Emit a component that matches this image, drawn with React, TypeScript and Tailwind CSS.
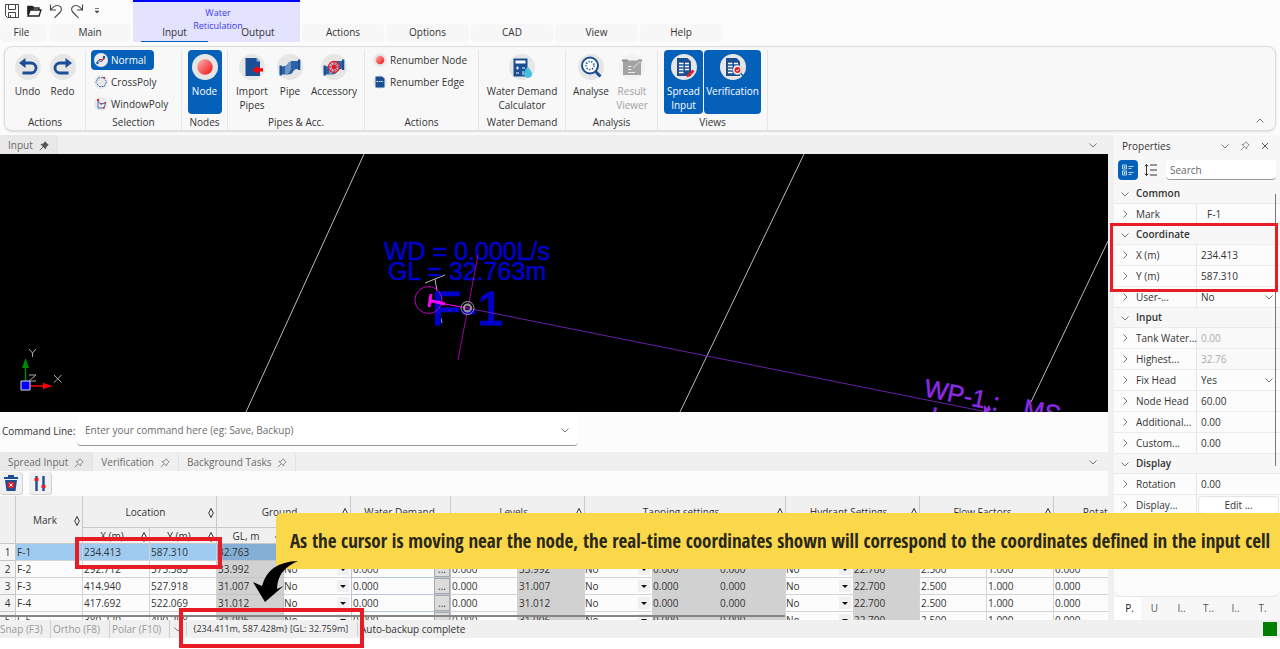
import React, { ReactNode } from "react";

const Disc = ({ children, faded }: { children: ReactNode; faded?: boolean }) => (
  <svg viewBox="0 0 26 26" className="size-[26px] shrink-0" aria-hidden="true">
    <circle cx="13" cy="13" r="13" fill={faded ? "#f2f2f2" : "#e6e6e6"} />
    {children}
  </svg>
);

const UndoIcon = () => (
  <Disc>
    <path d="M8 9h8a4.6 4.6 0 0 1 0 10H7.5" fill="none" stroke="#1b4f93" strokeWidth="2.8" />
    <path d="M10.5 4v10L4 9z" fill="#1b4f93" />
  </Disc>
);
const RedoIcon = () => (
  <Disc>
    <path d="M18 9h-8a4.6 4.6 0 0 0 0 10h8.5" fill="none" stroke="#1b4f93" strokeWidth="2.8" />
    <path d="M15.5 4v10L22 9z" fill="#1b4f93" />
  </Disc>
);
const NodeIcon = () => (
  <Disc>
    <defs>
      <linearGradient id="node" x1="0" y1="0" x2="1" y2="1">
        <stop offset="0" stopColor="#ffb4b4" />
        <stop offset="1" stopColor="#ee1111" />
      </linearGradient>
    </defs>
    <circle cx="13" cy="13" r="7.8" fill="url(#node)" />
  </Disc>
);
const ImportIcon = () => (
  <Disc>
    <path d="M6.500 4h11l3.500 3.500V22H6.500z" fill="#1b4f93" />
    <path d="M17.500 4v3.500H21" fill="#8aa9d4" />
    <path d="M24 14.300h-5v-2.600L13.500 16l5.500 4v-2.600h5z" fill="#ff0000" />
  </Disc>
);
const PipeShape = () => (
  <>
    <path d="M3.500 12.500q6.500 0 7.500-3 1-2.500 4.500-2.500H22v8q-4.500-.500-5.500 2-1.500 3.500-5.500 3.500H3.500z" fill="#2c62a5" />
    <path d="M8 12.300q2.500-.6 3-2.800.6-2 3-2.400v8q-1.500 3.400-3.500 5.400H8z" fill="#9db8da" opacity=".6" />
    <path d="M2.500 11.500h2.300v10H2.500zM21 5.500h2.300v10.500H21z" fill="#1b4f93" />
  </>
);
const PipeIcon = () => (
  <Disc>
    <PipeShape />
  </Disc>
);
const AccessoryIcon = () => (
  <Disc>
    <PipeShape />
    <g fill="none" stroke="#e81c24" strokeWidth="1.300">
      <circle cx="13" cy="13" r="5.500" fill="#e6c9cf" fillOpacity=".6" />
      <circle cx="13" cy="13" r="1.500" />
      <path d="M13 7.500v11M7.500 13h11M9 9l8 8M17 9l-8 8" strokeWidth=".9" />
    </g>
  </Disc>
);
const CalculatorIcon = () => (
  <Disc>
    <path d="M4.500 4.500h14v18h-14z" fill="#1b4f93" />
    <path d="M6.500 6.500h10v3h-10z" fill="#fff" />
    <path d="M7 14h3M8.500 12.500v3M13 14h3M7 19h3M13 18h2M13 20h2" stroke="#fff" strokeWidth="1.100" />
    <path d="M18.500 12.500q4.500 5 4.500 7.200a4 4 0 0 1-8 0q0-2.200 3.500-7.200z" fill="#45bfe0" />
  </Disc>
);
const AnalyseIcon = () => (
  <Disc>
    <circle cx="12" cy="11.500" r="8" fill="#fff" stroke="#1b4f93" strokeWidth="2" />
    <circle cx="12" cy="11.500" r="4" fill="none" stroke="#1b4f93" strokeWidth="1.600" strokeDasharray="1.300 1.500" />
    <path d="m17.500 17.500 5 5" stroke="#1b4f93" strokeWidth="3" />
  </Disc>
);
const ResultIcon = () => (
  <Disc faded>
    <path d="M4 6.500h18V21H4z" fill="#a3a3a3" />
    <path d="M3 5.500h6v2H3zM19 5.500h4v2h-4z" fill="#8d8d8d" />
    <path d="M9 12.500h3.500M9 15.500h3.500M9 18.500h7" stroke="#ececec" strokeWidth="1.200" />
    <path d="m14 14 7.500-7" stroke="#c4c4c4" strokeWidth="1.600" />
  </Disc>
);
const Sheet = () => (
  <>
    <path d="M6 4h10.500L20 7.500V22H6z" fill="#1b4f93" />
    <path d="M8 9.500h4.500M14 9.500h4M8 12.500h4.500M14 12.500h4M8 15.500h4.500M14 15.500h4M8 18.500h4.500" stroke="#fff" strokeWidth="1.300" />
  </>
);
const SpreadIcon = () => (
  <Disc>
    <Sheet />
    <path d="m15.500 23.500 1-3 5-5 2 2-5 5z" fill="#e81c24" />
  </Disc>
);
const VerificationIcon = () => (
  <Disc>
    <Sheet />
    <circle cx="17.500" cy="16" r="4.500" fill="#fff" stroke="#b8bcc8" strokeWidth=".8" />
    <circle cx="17.500" cy="16" r="3" fill="#e81c24" />
    <path d="m16 16 1.200 1.200 2-2.200" fill="none" stroke="#fff" strokeWidth=".9" />
    <path d="m20.500 19.200 2.500 2.500" stroke="#1b4f93" strokeWidth="1.400" />
  </Disc>
);

const SmallDisc = ({ children }: { children: ReactNode }) => (
  <svg viewBox="0 0 14 14" className="size-3.5 shrink-0" aria-hidden="true">
    <circle cx="7" cy="7" r="7" fill="#e9e9e9" />
    {children}
  </svg>
);

type Direction = "down" | "up" | "right";
const Chevron = ({ dir, className }: { dir: Direction; className?: string }) => (
  <svg viewBox="0 0 10 10" className={`size-2.5 shrink-0 ${className ?? ""}`} aria-hidden="true">
    <path
      d={dir === "down" ? "M1.500 3.500 5 7l3.500-3.500" : dir === "up" ? "M1.500 6.500 5 3l3.500 3.500" : "M3.500 1.500 7 5 3.500 8.500"}
      fill="none"
      stroke="#777"
    />
  </svg>
);
const Pin = ({ solid }: { solid?: boolean }) => (
  <svg viewBox="0 0 10 10" className="size-2.5 shrink-0" aria-hidden="true">
    <path
      d="M6 .8 9.200 4 8.200 4.500 6.800 6 6.600 8 2 3.400 4 3.200 5.500 1.800zM4.200 5.800.8 9.200"
      fill={solid ? "#555" : "none"}
      stroke={solid ? "#555" : "#808080"}
      strokeWidth=".9"
    />
  </svg>
);

const Group = ({ title, className, children }: { title: string; className: string; children: ReactNode }) => (
  <section className={`flex shrink-0 flex-col border-r border-[#e6e6e6] ${className}`}>
    <div className="flex h-[64px] shrink-0 justify-center gap-px">{children}</div>
    <h2 className="text-center leading-4">{title}</h2>
  </section>
);

const BigButton = ({
  icon,
  label,
  className,
  active,
  disabled,
}: {
  icon: ReactNode;
  label: string;
  className: string;
  active?: boolean;
  disabled?: boolean;
}) => (
  <button
    type="button"
    disabled={disabled}
    className={`flex h-[64px] shrink-0 flex-col items-center rounded pt-1 ${active ? "bg-[#0560b9] text-white" : ""} ${disabled ? "text-[#a0a0a0]" : ""} ${className}`}
  >
    {icon}
    <span className="mt-1 leading-[14px]">{label}</span>
  </button>
);

const SmallButton = ({ icon, label, active }: { icon: ReactNode; label: string; active?: boolean }) => (
  <button
    type="button"
    className={`flex h-5 items-center gap-[3px] self-start rounded px-[3px] pr-2 ${active ? "bg-[#0560b9] text-white" : ""}`}
  >
    {icon}
    <span>{label}</span>
  </button>
);

const QuickAccess = () => (
  <div className="flex h-[22px] items-center gap-1.5 pl-1">
    <button type="button" aria-label="Save">
      <svg viewBox="0 0 16 16" className="size-4" fill="none" stroke="#444">
        <path d="M1.500 1.500h13v13h-11l-2-2zM4.500 1.500v5h7v-5M4.500 14.500v-5h7v5M6.500 12v2" />
      </svg>
    </button>
    <button type="button" aria-label="Open">
      <svg viewBox="0 0 16 16" className="size-4" fill="none" stroke="#222" strokeWidth="1.300">
        <path d="M2 13V3.500h4l1.500 1.500H13v2M2 13l2.200-6H15l-2 6z" />
        <path d="M2 4h5v2H4l-2 5z" fill="#222" />
      </svg>
    </button>
    <button type="button" aria-label="Undo last">
      <svg viewBox="0 0 16 16" className="size-4" fill="none" stroke="#444" strokeWidth="1.100">
        <path d="M2.500 1.500v5.500H8M2.500 7q3.500-4.500 7-4.500a3.800 3.800 0 0 1 2.800 6.500L6.500 14.800" />
      </svg>
    </button>
    <button type="button" aria-label="Redo last">
      <svg viewBox="0 0 16 16" className="size-4" fill="none" stroke="#444" strokeWidth="1.100">
        <path d="M12.500 1.500v5.500H7M12.500 7Q9 2.500 5.500 2.500A3.800 3.800 0 0 0 2.700 9l5.800 5.800" />
      </svg>
    </button>
    <button type="button" aria-label="Customise toolbar" className="ml-0.5">
      <svg viewBox="0 0 6 8" className="h-2 w-1.5">
        <path d="M1 1.500h4M1 4h4L3 6z" stroke="#555" strokeWidth=".8" fill="#555" />
      </svg>
    </button>
  </div>
);

const Tab = ({ label, className }: { label: string; className: string }) => (
  <button type="button" className={`h-[18px] shrink-0 rounded bg-[#f7f7f7] pb-0.5 ${className}`}>
    {label}
  </button>
);

const Header = () => (
  <header className="flex h-[46px] items-start">
    <div className="flex w-[133px] shrink-0 flex-col gap-0.5">
      <QuickAccess />
      <nav className="flex gap-0.5">
        <Tab label="File" className="w-[47px] pr-1" />
        <Tab label="Main" className="w-[82px]" />
      </nav>
    </div>
    <div className="relative h-[42px] w-[167px] shrink-0 border-t-2 border-[#0000ff] bg-[#e3e3fd]">
      <p className="ml-[57px] w-14 pt-1 text-center text-[9px] leading-[13px] text-[#3a3af0]">Water Reticulation</p>
      <nav className="absolute inset-x-0 bottom-0 flex h-[18px]">
        <button type="button" className="mx-2 w-[67px] border-b border-[#0560b9]">
          Input
        </button>
        <button type="button" className="w-[84px] border-b border-transparent">
          Output
        </button>
      </nav>
    </div>
    <nav className="flex gap-0.5 pt-6 pl-0.5">
      <Tab label="Actions" className="w-[82px]" />
      <Tab label="Options" className="w-[83px]" />
      <Tab label="CAD" className="w-[82px]" />
      <Tab label="View" className="w-[83px]" />
      <Tab label="Help" className="w-[82px]" />
    </nav>
  </header>
);

const Ribbon = () => (
  <div className="mx-1 flex h-[85px] rounded-lg border border-[#dcdcdc] bg-[#f8f8f8] pt-[3px] shadow-sm">
    <Group title="Actions" className="w-[81px]">
      <BigButton icon={<UndoIcon />} label="Undo" className="w-[34px]" />
      <BigButton icon={<RedoIcon />} label="Redo" className="w-[34px]" />
    </Group>
    <Group title="Selection" className="w-[96px]">
      <div className="flex w-full flex-col gap-0.5 pl-[5px]">
        <SmallButton
          active
          label="Normal"
          icon={
            <SmallDisc>
              <path d="M3 10q1-4 3-2t4-4" fill="none" stroke="#1b4f93" />
              <path d="M5 6.500h3l3-1" stroke="#e81c24" fill="none" />
              <circle cx="3.500" cy="10" r="1.200" fill="#1b4f93" />
              <circle cx="10" cy="4" r="1.200" fill="#1b4f93" />
            </SmallDisc>
          }
        />
        <SmallButton
          label="CrossPoly"
          icon={
            <SmallDisc>
              <path d="m4 3 6-.5L12.500 7 10 11.500H5L2 7.500z" fill="none" stroke="#3f6fb0" strokeDasharray="2 .8" />
              <circle cx="10" cy="2.800" r="1" fill="#e81c24" />
            </SmallDisc>
          }
        />
        <SmallButton
          label="WindowPoly"
          icon={
            <SmallDisc>
              <path d="M4 3v8h6l1.500-5L7 7 4 4.500" fill="none" stroke="#3f6fb0" />
              <path d="M3 2h2v2H3zM6.200 6h1.500v1.500H6.200zM10.500 5H12v1.500h-1.500zM9 10h1.500v1.500H9z" fill="#e81c24" />
            </SmallDisc>
          }
        />
      </div>
    </Group>
    <Group title="Nodes" className="w-[46px]">
      <BigButton active icon={<NodeIcon />} label="Node" className="w-[34px]" />
    </Group>
    <Group title="Pipes & Acc." className="w-[137px]">
      <BigButton icon={<ImportIcon />} label="Import Pipes" className="w-[42px]" />
      <BigButton icon={<PipeIcon />} label="Pipe" className="w-[32px]" />
      <BigButton icon={<AccessoryIcon />} label="Accessory" className="w-[54px]" />
    </Group>
    <Group title="Actions" className="w-[114px]">
      <div className="flex w-full flex-col gap-0.5 pl-[5px]">
        <SmallButton
          label="Renumber Node"
          icon={
            <SmallDisc>
              <circle cx="7" cy="7" r="4.300" fill="url(#node)" />
            </SmallDisc>
          }
        />
        <SmallButton
          label="Renumber Edge"
          icon={
            <SmallDisc>
              <path d="M2.500 1.500h6.500l2.500 2v9h-9z" fill="#1b4f93" />
              <path d="M3.500 6.500h7" stroke="#fff" strokeDasharray="1.500 .8" />
            </SmallDisc>
          }
        />
      </div>
    </Group>
    <Group title="Water Demand" className="w-[87px]">
      <BigButton icon={<CalculatorIcon />} label="Water Demand Calculator" className="w-[76px]" />
    </Group>
    <Group title="Analysis" className="w-[92px]">
      <BigButton icon={<AnalyseIcon />} label="Analyse" className="w-[40px]" />
      <BigButton disabled icon={<ResultIcon />} label="Result Viewer" className="w-[40px]" />
    </Group>
    <Group title="Views" className="w-[110px]">
      <BigButton active icon={<SpreadIcon />} label="Spread Input" className="w-[39px]" />
      <BigButton active icon={<VerificationIcon />} label="Verification" className="w-[57px]" />
    </Group>
    <button type="button" aria-label="Collapse ribbon" className="mr-2.5 mb-1 ml-auto self-end">
      <Chevron dir="up" />
    </button>
  </div>
);

const Drawing = () => (
  <svg
    viewBox="0 0 1108 258"
    preserveAspectRatio="xMinYMin slice"
    className="block h-[258px] w-full shrink-0 bg-black font-['Liberation_Sans',sans-serif]"
    role="img"
    aria-label="Network drawing"
  >
    <g stroke="#b9b9b9" strokeWidth="1" fill="none">
      <path d="M364 0 246 258M804 0 680 258M1108 87l-77 161" />
      <path d="m425 129 20-8M435 125l2 12M441 164l1 5" />
    </g>
    <g fill="#0000cc" stroke="#0000cc" strokeWidth=".5">
      <text x="384" y="106" fontSize="25">WD = 0.000L/s</text>
      <text x="388" y="126" fontSize="25">GL = 32.763m</text>
      <text x="432" y="171" fontSize="48" strokeWidth="1.200">F-1</text>
    </g>
    <path d="m467 154 520 104" stroke="#6a1fa8" />
    <path d="m478 101-20 105" stroke="#a000a0" />
    <circle cx="428.500" cy="146" r="13.500" fill="none" stroke="#c000c0" />
    <path d="m431 140-2 13M430 146.500l15 3.500" stroke="#ff00ff" strokeWidth="3" />
    <path d="m445 150 22 4" stroke="#ff00ff" />
    <g fill="none" stroke="#9a9a9a">
      <circle cx="467.500" cy="154" r="6.500" />
      <circle cx="467.500" cy="154" r="3.500" strokeWidth="2" />
    </g>
    <g fill="#8a2be2" stroke="#8a2be2" strokeWidth=".5" fontSize="25">
      <text transform="translate(923 242) rotate(11.500)">WP-1 :</text>
      <text transform="translate(1022 262) rotate(11.500)">MS</text>
      <text transform="translate(929 270) rotate(11.500)">L</text>
    </g>
    <path d="m984 251 3 3 2-3 2 5-3 2h-4z" fill="#8a2be2" />
    <path d="M25.500 227v-20" stroke="#008800" strokeWidth="1.500" />
    <path d="m25.500 204 3.500 10h-7z" fill="#008800" />
    <path d="M30 232h14" stroke="#ff0000" strokeWidth="1.500" />
    <path d="m52 232-9 3.300v-6.600z" fill="#ff0000" />
    <path d="M21 227h9v9h-9z" fill="#0000ff" stroke="#ddd" />
    <path
      d="m29 195 3.500 4 3.500-4M32.500 199v4M29 221h7l-7 6h7M54 221l7.500 7.500M61.500 221l-7.500 7.500"
      fill="none"
      stroke="#aaa"
    />
  </svg>
);

const CommandLine = () => (
  <form className="flex h-[40px] shrink-0 items-start bg-[#fcfcfc] pt-px pl-0.5">
    <label htmlFor="command" className="w-[75px] shrink-0 pt-2.5 leading-4">
      Command Line:
    </label>
    <div className="flex h-[33px] w-[501px] items-center rounded border-b border-[#9a9a9a] bg-white px-2 pt-0.5">
      <input
        id="command"
        placeholder="Enter your command here (eg: Save, Backup)"
        className="min-w-0 flex-1 outline-none placeholder:text-[#6b6b6b]"
      />
      <Chevron dir="down" />
    </div>
  </form>
);

const DockTab = ({ label, active, solid }: { label: string; active?: boolean; solid?: boolean }) => (
  <button
    type="button"
    className={`flex h-[19px] items-center gap-1.5 rounded-t border-r border-[#e2e2e2] px-2 pt-0.5 text-[#6a6a6a] ${active ? "bg-[#e8e8e8]" : ""}`}
  >
    {label}
    <Pin solid={solid} />
  </button>
);

const Diamond = () => (
  <svg viewBox="0 0 6 10" className="h-2.5 w-1.5 shrink-0" aria-hidden="true">
    <path d="m3 .5 2.300 4.500L3 9.500.7 5z" fill="none" stroke="#222" strokeWidth=".9" />
  </svg>
);

const HeadCell = ({ label, sort = true }: { label: string; sort?: boolean }) => (
  <div className="flex items-center pt-0.5 pr-0.5 leading-[13px]">
    <span className="flex-1 whitespace-nowrap">{label}</span>
    {sort && <Diamond />}
  </div>
);

const groups: { label: string; span: number; sort?: boolean }[] = [
  { label: "Location", span: 2 },
  { label: "Ground", span: 2 },
  { label: "Water Demand", span: 1, sort: false },
  { label: "Levels", span: 2 },
  { label: "Tapping settings", span: 3 },
  { label: "Hydrant Settings", span: 2 },
  { label: "Flow Factors", span: 2 },
  { label: "Rotation", span: 1, sort: false },
];
const subHeads = ["X (m)", "Y (m)", "GL, m", "", "", "", "", "", "", "", "", "", "", "", ""];
const rows = [
  ["F-1", "234.413", "587.310", "32.763"],
  ["F-2", "292.712", "575.583", "33.992"],
  ["F-3", "414.940", "527.918", "31.007"],
  ["F-4", "417.692", "522.069", "31.012"],
  ["F-5", "380.220", "490.298", "31.006"],
];

const Cell = ({ children, grey }: { children: ReactNode; grey?: boolean }) => (
  <td className={`h-[17px] border-r border-b border-[#d4d4d4] p-0 pl-px ${grey ? "bg-[#d1d1d1]" : ""}`}>{children}</td>
);

const YesNo = ({ label }: { label: string }) => (
  <td className="h-[17px] border-b border-[#d4d4d4] p-0">
    <div className="relative flex h-4 items-center">
      <select aria-label={label} defaultValue="No" className="h-4 w-full appearance-none outline-none">
        <option>No</option>
        <option>Yes</option>
      </select>
      <svg viewBox="0 0 12 12" className="pointer-events-none absolute right-0.5 size-3" aria-hidden="true">
        <path d="M0 0h12v12H0z" fill="#f0f0f0" />
        <path d="M3 5h6L6 8z" fill="#111" />
      </svg>
    </div>
  </td>
);

const Spreadsheet = () => (
  <div className="relative min-h-0 flex-1 overflow-hidden bg-[#fcfcfc]">
    <table className="w-[1153px] table-fixed border-separate border-spacing-0 text-left">
      <colgroup>
        <col className="w-4" />
        <col className="w-[67px]" />
        <col className="w-[67px]" />
        <col className="w-[67px]" />
        <col className="w-[67px]" />
        <col className="w-[67px]" />
        <col className="w-[100px]" />
        <col className="w-[67px]" />
        <col className="w-[67px]" />
        <col className="w-[67px]" />
        <col className="w-[67px]" />
        <col className="w-[67px]" />
        <col className="w-[67px]" />
        <col className="w-[67px]" />
        <col className="w-[67px]" />
        <col className="w-[67px]" />
        <col className="w-[100px]" />
      </colgroup>
      <thead className="bg-[#f0f0f0] text-center">
        <tr>
          <th rowSpan={2} className="border-r border-b border-[#c8c8c8] p-0" aria-label="Row" />
          <th rowSpan={2} className="border-r border-b border-[#c8c8c8] p-0 font-normal">
            <HeadCell label="Mark" />
          </th>
          {groups.map((g) => (
            <th key={g.label} colSpan={g.span} className="h-8 border-r border-b border-[#c8c8c8] p-0 font-normal">
              <HeadCell label={g.label} sort={g.sort} />
            </th>
          ))}
        </tr>
        <tr>
          {subHeads.map((s, i) => (
            <th key={i} className="h-4 border-r border-b border-[#c8c8c8] p-0 font-normal">
              <HeadCell label={s} sort={s !== ""} />
            </th>
          ))}
        </tr>
      </thead>
      <tbody>
        {rows.map(([mark, x, y, gl], i) => (
          <tr key={mark} className={i === 0 ? "bg-[#9fcbf0]" : ""}>
            <th className="border-r border-b border-[#c8c8c8] bg-[#f4f4f4] p-0 text-center font-normal">{i + 1}</th>
            <Cell>{mark}</Cell>
            <Cell>{x}</Cell>
            <Cell>{y}</Cell>
            <td className={`border-r border-b border-[#c4c4c4] p-0 pl-px ${i === 0 ? "bg-[#84aed3]" : "bg-[#d1d1d1]"}`}>
              {gl}
            </td>
            <YesNo label={`${mark} ground`} />
            <td className="h-[17px] border-x border-b border-[#b9c4d8] p-0">
              <div className="flex h-4">
                <input aria-label={`${mark} water demand`} defaultValue="0.000" className="min-w-0 flex-1 pl-px outline-none" />
                <button
                  type="button"
                  aria-label={`Edit ${mark} demand`}
                  className="w-4 border border-[#a8a8a8] bg-[#dcdcdc] leading-3"
                >
                  ...
                </button>
              </div>
            </td>
            <Cell>0.000</Cell>
            <Cell grey>{gl}</Cell>
            <YesNo label={`${mark} tapping`} />
            <Cell grey>0.000</Cell>
            <Cell grey>0.000</Cell>
            <YesNo label={`${mark} hydrant`} />
            <Cell grey>22.700</Cell>
            <Cell>2.500</Cell>
            <Cell>1.000</Cell>
            <Cell>0.000</Cell>
          </tr>
        ))}
      </tbody>
    </table>
    <div className="absolute bottom-[3px] left-0 h-0.5 w-[785px] bg-[#858585]" />
    <div className="absolute top-[41px] left-[75px] h-8 w-[147px] border-4 border-[#e81c24]" />
  </div>
);

type Kind = "text" | "muted" | "select" | "button";
type Item = { name: string; value?: string; kind?: Kind };
const items: Item[] = [
  { name: "Common" },
  { name: "Mark", value: "F-1", kind: "text" },
  { name: "Coordinate" },
  { name: "X (m)", value: "234.413", kind: "text" },
  { name: "Y (m)", value: "587.310", kind: "text" },
  { name: "User-...", value: "No", kind: "select" },
  { name: "Input" },
  { name: "Tank Water...", value: "0.00", kind: "muted" },
  { name: "Highest...", value: "32.76", kind: "muted" },
  { name: "Fix Head", value: "Yes", kind: "select" },
  { name: "Node Head", value: "60.00", kind: "text" },
  { name: "Additional...", value: "0.00", kind: "text" },
  { name: "Custom...", value: "0.00", kind: "text" },
  { name: "Display" },
  { name: "Rotation", value: "0.00", kind: "text" },
  { name: "Display...", value: "Edit ...", kind: "button" },
];

const PropertyRow = ({ item, id }: { item: Item; id: string }) => {
  if (!item.kind)
    return (
      <h3 className="flex h-5 items-center gap-1.5 border-b border-[#ebebeb] bg-[#f7f7f7] pl-1.5 font-semibold">
        <Chevron dir="down" />
        {item.name}
      </h3>
    );
  return (
    <div className="flex h-[21px] border-b border-[#ebebeb]">
      <label htmlFor={id} className="flex w-[83px] shrink-0 items-center gap-1.5 border-r border-[#e6e6e6] pl-1.5 whitespace-nowrap">
        <Chevron dir="right" />
        {item.name}
      </label>
      {item.kind === "button" ? (
        <button id={id} type="button" className="m-px flex-1 rounded border border-[#e4e4e4] bg-white">
          {item.value}
        </button>
      ) : item.kind === "select" ? (
        <div className="relative flex min-w-0 flex-1 items-center">
          <select id={id} defaultValue={item.value} className="w-full appearance-none pl-1 outline-none">
            <option>No</option>
            <option>Yes</option>
          </select>
          <Chevron dir="down" className="pointer-events-none absolute right-1.5" />
        </div>
      ) : (
        <input
          id={id}
          defaultValue={item.value}
          disabled={item.kind === "muted"}
          className={`min-w-0 flex-1 outline-none ${item.name === "Mark" ? "pl-2.5" : "pl-1"} ${item.kind === "muted" ? "bg-[#f9f9f9] text-[#ababab]" : ""}`}
        />
      )}
    </div>
  );
};

const Properties = () => (
  <aside className="flex w-[166px] shrink-0 flex-col bg-[#f7f7f7]">
    <div className="flex h-[22px] items-center gap-2.5 pr-2.5 pl-2">
      <h2 className="flex-1">Properties</h2>
      <Chevron dir="down" />
      <Pin />
      <button type="button" aria-label="Close">
        <svg viewBox="0 0 10 10" className="size-2.5">
          <path d="m2 2 6 6M8 2 2 8" stroke="#555" />
        </svg>
      </button>
    </div>
    <div className="flex h-[27px] items-center gap-1.5 pb-px pl-1">
      <button type="button" aria-label="Grouped" className="flex size-5 shrink-0 items-center justify-center rounded bg-[#0560b9]">
        <svg viewBox="0 0 14 14" className="size-3.5" fill="none" stroke="#cfe2f5" strokeWidth=".9">
          <path d="M1.500 2h4v4h-4zM1.500 8h4v4h-4zM3.500 3v2M2.500 4h2M3.500 9v2M2.500 10h2M7.500 3.500h5M7.500 5.500h3M7.500 9.500h5M7.500 11.500h3" />
        </svg>
      </button>
      <button type="button" aria-label="Sort">
        <svg viewBox="0 0 14 14" className="size-3.5" fill="none" stroke="#333">
          <path d="M2.500 1.500v11M.8 3.300l1.700-1.800 1.700 1.800M.8 10.700l1.700 1.800 1.700-1.800M6 2h7M6 7h7M6 12h7" />
        </svg>
      </button>
      <input
        type="search"
        aria-label="Search properties"
        placeholder="Search"
        className="mr-1 ml-0.5 h-5 min-w-0 flex-1 rounded border-b border-[#999] bg-white px-1 outline-none placeholder:text-[#666]"
      />
    </div>
    <div className="relative flex-1 rounded-b-lg border-b border-[#e6e6e6] bg-[#fcfcfc]">
      {items.map((item, i) => (
        <PropertyRow key={item.name + i} item={item} id={`property-${i}`} />
      ))}
      <div className="absolute top-2.5 right-1 h-[272px] w-px bg-[#777]" />
      <div className="absolute top-[39px] -left-1 right-0.5 h-[69px] border-[3px] border-[#e81c24]" />
    </div>
    <nav className="flex h-[23px] shrink-0 text-center text-[#555]">
      <button type="button" className="w-[27px] rounded-t bg-white pl-1 text-[#222]">P.</button>
      <button type="button" className="w-[27px]">U</button>
      <button type="button" className="w-[27px]">I..</button>
      <button type="button" className="w-[27px]">T..</button>
      <button type="button" className="w-[27px]">I..</button>
      <button type="button" className="w-[27px]">T.</button>
    </nav>
  </aside>
);

const StatusBar = () => (
  <footer className="relative flex h-[18px] shrink-0 items-center bg-[#f0f0f0] text-[#9a9a9a]">
    <button type="button" className="h-full w-[51px] shrink-0 border-r border-[#cfcfcf] text-left whitespace-nowrap">Snap (F3)</button>
    <button type="button" className="h-full w-[59px] shrink-0 border-r border-[#cfcfcf] pl-0.5 text-left">Ortho (F8)</button>
    <button type="button" className="h-full w-[60px] shrink-0 border-r border-[#cfcfcf] pl-0.5 text-left">Polar (F10)</button>
    <Chevron dir="down" className="mx-[3px]" />
    <span className="w-[172px] shrink-0 border-x border-[#cfcfcf] pl-1.5 text-[9px] whitespace-nowrap text-[#333]">
      {"{234.411m, 587.428m} [GL: 32.759m]"}
    </span>
    <span className="pl-0.5 whitespace-nowrap text-[#333]">Auto-backup complete</span>
    <span className="mr-[3px] ml-auto size-3.5 bg-[#008000]" />
    <div className="absolute top-[-12px] left-[179px] h-10 w-[185px] border-4 border-[#e81c24]" />
  </footer>
);

export default function App() {
  return (
    <div className="relative flex h-screen flex-col overflow-hidden bg-white pb-[11px] font-['Open_Sans',sans-serif] text-[10px] text-[#333]">
      <div className="shrink-0 bg-[#fcfcfc] pb-1">
        <Header />
        <Ribbon />
      </div>
      <main className="relative flex min-h-0 flex-1 bg-[#f0f0f0]">
        <div className="mr-1.5 flex min-w-0 flex-1 flex-col">
          <div className="flex h-[19px] shrink-0 items-center">
            <DockTab label="Input" active solid />
            <Chevron dir="down" className="mr-2.5 ml-auto" />
          </div>
          <Drawing />
          <CommandLine />
          <div className="flex h-[19px] shrink-0 items-center">
            <DockTab label="Spread Input" active />
            <DockTab label="Verification" />
            <DockTab label="Background Tasks" />
            <Chevron dir="down" className="mr-2.5 ml-auto" />
          </div>
          <div className="flex h-[25px] shrink-0 items-center gap-1.5 bg-[#fcfcfc]">
            <button type="button" aria-label="Delete rows" className="rounded border-r border-b border-[#d0d0d0] bg-[#f0f0f0]">
              <svg viewBox="0 0 22 22" className="size-[22px]">
                <path d="M4 5h14v2H4zM8 3h6v2H8zM5 8h12l-1.500 11h-9z" fill="#1b4f93" />
                <circle cx="11" cy="13" r="3.500" fill="#e81c24" />
                <path d="m9.500 11.500 3 3M12.500 11.500l-3 3" stroke="#fff" />
              </svg>
            </button>
            <button type="button" aria-label="Filter" className="rounded border-r border-b border-[#d0d0d0] bg-[#f0f0f0]">
              <svg viewBox="0 0 22 22" className="size-[22px]">
                <path d="M7.500 4v15M14.500 4v15" stroke="#1b4f93" strokeWidth="2.400" />
                <path d="M5.500 6h4v3h-4zM12.500 13h4v3h-4z" fill="#e81c24" />
              </svg>
            </button>
          </div>
          <Spreadsheet />
        </div>
        <Properties />
        <p className="absolute right-0 bottom-[51px] left-[276px] flex h-14 items-center justify-center rounded-l-md bg-[#fbd849] pl-1 font-['Open_Sans_Condensed','Open_Sans',sans-serif] text-[19px] whitespace-nowrap text-[#2a281e]">
          As the cursor is moving near the node, the real-time coordinates shown will correspond to the coordinates defined in the input cell
        </p>
        <svg viewBox="0 0 50 44" className="absolute bottom-[16px] left-[250px] h-11 w-[50px]" aria-hidden="true">
          <path d="M48 1Q27 10 27 29l6.500-3L15 42 3 22l9 4Q18 2 48 1z" fill="#000" />
        </svg>
      </main>
      <StatusBar />
    </div>
  );
}
